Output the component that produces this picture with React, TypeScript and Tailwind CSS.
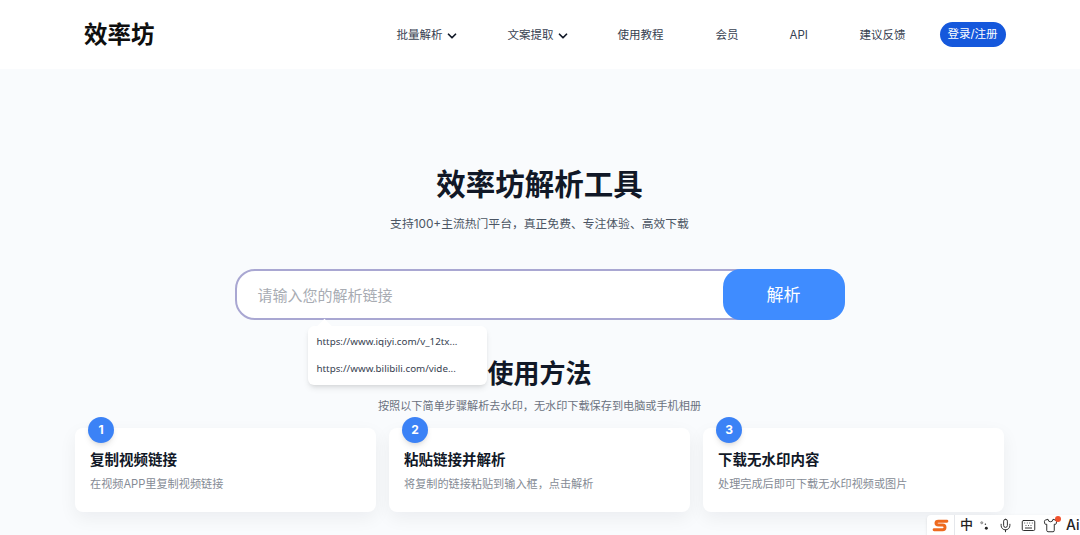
import React from 'react';
import { ChevronDown, Mic, Keyboard, Shirt } from 'lucide-react';

const steps = [
  { id: 1, title: '复制视频链接', desc: '在视频APP里复制视频链接' },
  { id: 2, title: '粘贴链接并解析', desc: '将复制的链接粘贴到输入框，点击解析' },
  { id: 3, title: '下载无水印内容', desc: '处理完成后即可下载无水印视频或图片' },
];

const font = "font-['Inter','Noto_Sans_CJK_SC',sans-serif]";

const NavItem: React.FC<{ label: string; arrow?: boolean; className: string }> = ({ label, arrow, className }) => (
  <span className={`flex items-center pt-[2px] text-[11.5px] text-[#374151] ${className}`}>
    {label}
    {arrow && <ChevronDown className="ml-[2px] size-[14px] text-[#111827]" strokeWidth={3} />}
  </span>
);

export default function App() {
  return (
    <div className={`${font} relative h-[535px] w-[1080px] overflow-hidden bg-[#f9fbfd]`}>
      <header className="flex h-[69px] items-center bg-white pl-[84px]">
        <span className="text-[23.5px] font-bold text-[#0f0f0f]">效率坊</span>
        <nav className="ml-[242px] flex items-center">
          <NavItem label="批量解析" arrow className="w-[111px]" />
          <NavItem label="文案提取" arrow className="w-[110px]" />
          <NavItem label="使用教程" className="w-[98px]" />
          <NavItem label="会员" className="w-[74px]" />
          <NavItem label="API" className="w-[70px]" />
          <NavItem label="建议反馈" className="w-[80px]" />
          <button className="flex h-[25px] w-[66px] items-center justify-center rounded-full bg-[#1558dc] text-[11.5px] text-white">登录/注册</button>
        </nav>
      </header>

      <main className="flex flex-col items-center pt-[95px] pr-px">
        <h1 className="text-[29.5px] leading-[40px] font-bold text-[#111827]">效率坊解析工具</h1>
        <p className="mt-[12px] text-[11.8px] leading-4 text-[#4b5563]">支持100+主流热门平台，真正免费、专注体验、高效下载</p>

        <div className="relative mt-[37px] flex h-[51px] w-[610px] rounded-[20px] border-2 border-[#a9a7d2] bg-white">
          <span className="flex flex-1 items-center pt-[3px] pl-[21px] text-[15px] text-[#a8acb3]">请输入您的解析链接</span>
          <button className="-m-[2px] flex w-[122px] items-center justify-center rounded-[18px] bg-[#3f8cff] pt-[2px] text-[17px] text-white">解析</button>
          <div className="absolute top-[55px] left-[71px] z-10 flex h-[59px] w-[179px] flex-col justify-center gap-[9px] rounded-md bg-white pl-[9px] font-['Noto_Sans',sans-serif] text-[9.8px] leading-[18px] text-[#374151] shadow-md">
            <div className="absolute -top-[5px] left-[11px] size-[11px] rotate-45 bg-white" />
            <span>https://www.iqiyi.com/v_12tx...</span>
            <span>https://www.bilibili.com/vide...</span>
          </div>
        </div>

        <h2 className="mt-[34px] text-[26px] leading-[40px] font-bold text-[#111827]">使用方法</h2>
        <p className="mt-[4px] text-[11.15px] leading-4 text-[#6b7280]">按照以下简单步骤解析去水印，无水印下载保存到电脑或手机相册</p>

        <div className="mt-[14px] grid w-[929px] grid-cols-3 gap-[13px]">
          {steps.map((s) => (
            <div key={s.id} className="relative h-[84px] rounded-lg bg-white pt-[22px] pl-[15px] shadow-[0_6px_18px_rgba(15,23,42,0.06)]">
              <span className="absolute -top-[11px] left-[13px] flex size-[26px] items-center justify-center rounded-full bg-[#3b82f6] text-xs font-bold text-white shadow-md">{s.id}</span>
              <h3 className="text-[14.5px] leading-5 font-bold text-[#111827]">{s.title}</h3>
              <p className="mt-[6px] text-[11.15px] leading-4 text-[#858b95]">{s.desc}</p>
            </div>
          ))}
        </div>
      </main>

      <div className="absolute right-0 bottom-0 flex h-[20px] w-[153px] items-center rounded-tl bg-white pl-[5px] text-[#222] shadow-sm">
        <svg viewBox="0 0 16 12" className="h-[13px] w-[17px]" fill="none" stroke="#ee6a1f" strokeWidth="2.8" strokeLinecap="round">
          <path d="M14 2H6C3 2 3 5.5 6 5.5h4c3 0 3 4.5 0 4.5H2" />
        </svg>
        <span className="ml-[5px] border-l border-gray-200 pl-[5px] text-[13px] font-medium">中</span>
        <svg viewBox="0 0 12 12" className="ml-[6px] size-[11px]" fill="#222">
          <circle cx="3" cy="3" r="1.2" stroke="#222" strokeWidth=".4" fillOpacity=".3" />
          <circle cx="7" cy="4.5" r=".8" />
          <circle cx="8" cy="9" r="1.6" />
        </svg>
        <Mic className="ml-[8px] size-[15px]" strokeWidth={1.5} />
        <Keyboard className="ml-[8px] size-[15px]" strokeWidth={1.5} />
        <span className="relative ml-[7px]">
          <Shirt className="size-[15px]" strokeWidth={1.5} />
          <span className="absolute -top-[2px] -right-[3px] size-[6px] rounded-full bg-[#f0512d]" />
        </span>
        <span className="ml-[8px] text-sm font-medium whitespace-nowrap">Ai</span>
      </div>
    </div>
  );
}
